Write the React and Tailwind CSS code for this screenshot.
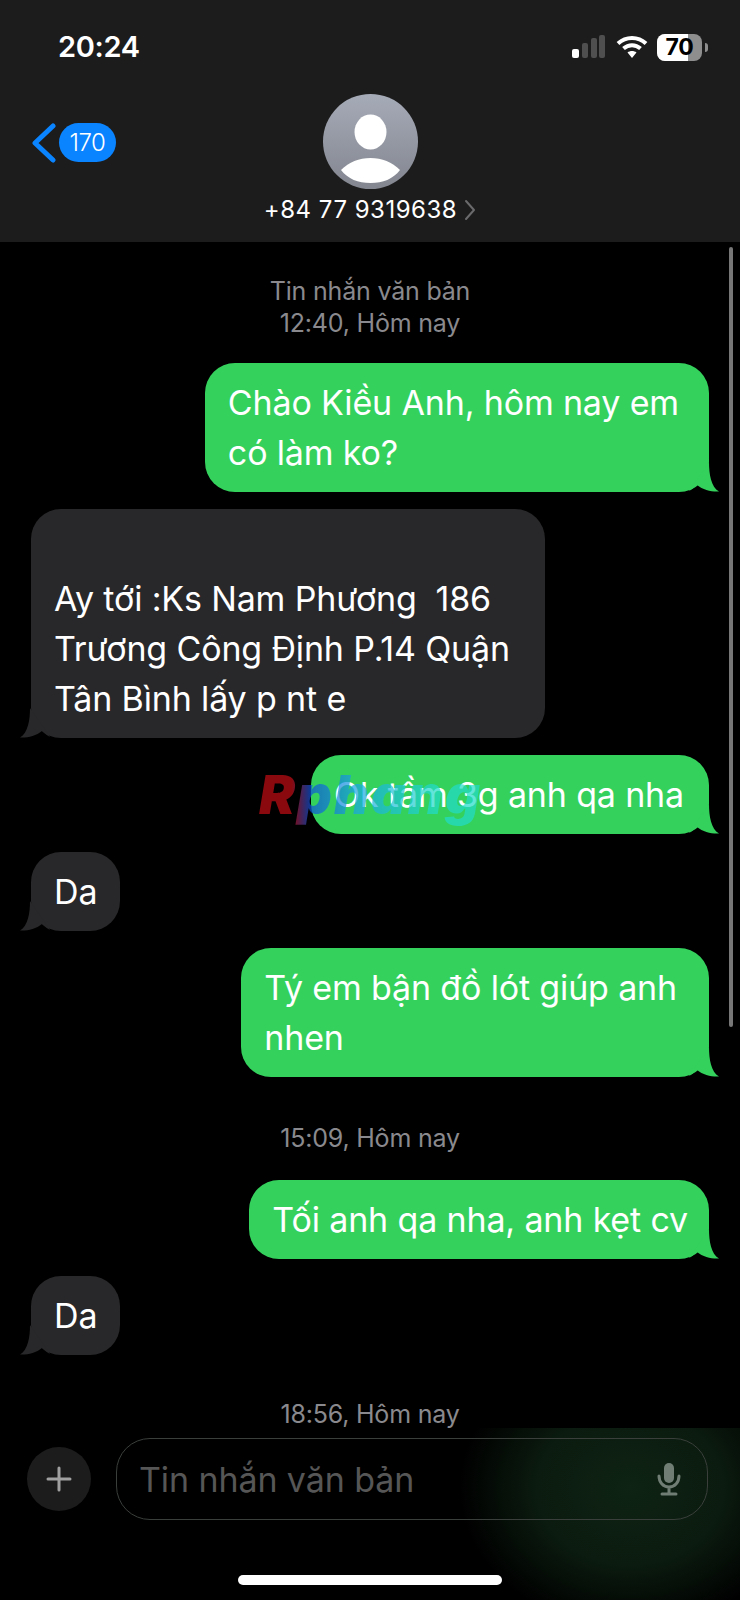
import React from "react";

const FONT = { fontFamily: "Inter, 'Noto Sans', sans-serif" };

function Tail({ side, color }) {
  const cls =
    side === "right"
      ? "absolute bottom-0 right-[-10px] w-[30px] h-[30px]"
      : "absolute bottom-0 left-[-11px] w-[30px] h-[30px] -scale-x-100";
  return (
    <svg viewBox="0 0 30 30" className={cls} fill={color}>
      <path d="M20 0C20 12 22 25 30 29.5C23 30 14 28 8 23C5 26 2 28 0 29Z" />
    </svg>
  );
}

function Bubble({ side, mt, pr = "pr-[23px]", children }) {
  const sent = side === "right";
  return (
    <div
      className={`relative w-fit pl-[23px] py-[14.5px] rounded-[30px] text-white text-[34px] leading-[50px] tracking-[-0.15px] ${mt} ${pr} ${
        sent ? "self-end bg-[#34d15d]" : "self-start bg-[#28282a]"
      }`}
    >
      {children}
      <Tail side={side} color={sent ? "#34d15d" : "#28282a"} />
    </div>
  );
}

function Stamp({ mt, lead = "leading-8", children }) {
  return (
    <div className={`self-center text-center text-[25px] text-[#8a8a8e] tracking-[-0.2px] ${lead} ${mt}`}>
      {children}
    </div>
  );
}

function StatusIcons() {
  return (
    <div className="flex items-center">
      <svg width="34" height="24" viewBox="0 0 34 24" className="mr-[10px]">
        <rect x="0" y="14" width="7" height="9" rx="2" fill="#fff" />
        <rect x="10" y="8" width="6" height="15" rx="2" fill="#4f4f4f" />
        <rect x="19" y="3" width="6" height="20" rx="2" fill="#4f4f4f" />
        <rect x="27" y="0" width="6" height="23" rx="2" fill="#4f4f4f" />
      </svg>
      <svg width="32" height="24" viewBox="0 0 32 24" className="mr-[9px]">
        <path d="M2 8.5C10 1 22 1 30 8.5" stroke="#fff" strokeWidth="4" fill="none" strokeLinecap="butt" />
        <path d="M7.5 13.5C12.5 9 19.5 9 24.5 13.5" stroke="#fff" strokeWidth="4" fill="none" />
        <path d="M11.5 17.5C14 15.5 18 15.5 20.5 17.5L16 23Z" fill="#fff" />
      </svg>
      <div className="relative w-[45px] h-[27px] rounded-[8px] bg-[#8e8e8e] overflow-hidden">
        <div className="w-[31px] h-full bg-white" />
        <div className="absolute inset-0 flex items-center justify-center text-black text-[23px] font-bold tracking-[-0.3px]">
          70
        </div>
      </div>
      <div className="w-[3px] h-[9px] ml-[3px] rounded-r-full bg-[#8e8e8e]" />
    </div>
  );
}

function Avatar() {
  return (
    <div className="w-[95px] h-[95px] rounded-full bg-gradient-to-b from-[#a6abb8] to-[#83868f] overflow-hidden">
      <svg viewBox="0 0 95 95" width="95" height="95" fill="#fff">
        <ellipse cx="47.5" cy="38" rx="16" ry="17.5" />
        <path d="M18 76C26 68 36 64 47.5 64C59 64 69 68 77 76C70 85 60 89 47.5 89C35 89 25 85 18 76Z" />
      </svg>
    </div>
  );
}

export default function App() {
  return (
    <div className="relative w-[740px] h-[1600px] bg-black flex flex-col overflow-hidden" style={FONT}>
      <header className="h-[242px] shrink-0 bg-[#1c1c1c] flex flex-col">
        <div className="h-[94px] flex items-center justify-between pl-[58px] pr-[32px]">
          <span className="text-white text-[29px] font-semibold tracking-[-0.3px]">20:24</span>
          <StatusIcons />
        </div>
        <div className="grid grid-cols-[1fr_auto_1fr] items-center">
          <div className="flex items-center pl-[32px] mt-[2px]">
            <svg width="24" height="40" viewBox="0 0 24 40" fill="none" stroke="#0a84ff" strokeWidth="5" strokeLinecap="round" strokeLinejoin="round">
              <path d="M21 3L3 20L21 37" />
            </svg>
            <div className="ml-[3px] w-[57px] h-[39px] rounded-full bg-[#0a84ff] flex items-center justify-center text-white text-[24px] font-light tracking-[-0.5px]">
              170
            </div>
          </div>
          <Avatar />
          <div />
        </div>
        <div className="mt-[5px] flex items-center justify-center text-white text-[24px] leading-8 tracking-[0.5px]">
          <span>+84 77 9319638</span>
          <svg width="12" height="22" viewBox="0 0 12 22" fill="none" stroke="#6a6a6c" strokeWidth="2" strokeLinecap="round" strokeLinejoin="round" className="ml-[7px]">
            <path d="M2 2L10 11L2 20" />
          </svg>
        </div>
      </header>

      <main className="flex-1 min-h-0 overflow-hidden flex flex-col pt-[33px] pl-[31px] pr-[31px]">
        <Stamp mt="mt-0">
          Tin nhắn văn bản
          <br />
          12:40, Hôm nay
        </Stamp>
        <Bubble side="right" mt="mt-6" pr="pr-[30px]">
          Chào Kiều Anh, hôm nay em
          <br />
          có làm ko?
        </Bubble>
        <Bubble side="left" mt="mt-[17px]" pr="pr-[35px]">
          <div className="h-[50px]" />
          Ay tới :Ks Nam Phương&nbsp; 186
          <br />
          Trương Công Định P.14 Quận
          <br />
          Tân Bình lấy p nt e
        </Bubble>
        <Bubble side="right" mt="mt-[17px]" pr="pr-[25px]">Ok tầm 3g anh qa nha</Bubble>
        <Bubble side="left" mt="mt-[18px]">Da</Bubble>
        <Bubble side="right" mt="mt-[17px]" pr="pr-[32px]">
          Tý em bận đồ lót giúp anh
          <br />
          nhen
        </Bubble>
        <Stamp mt="mt-[45px]">15:09, Hôm nay</Stamp>
        <Bubble side="right" mt="mt-[26px]" pr="pr-[21px]">Tối anh qa nha, anh kẹt cv</Bubble>
        <Bubble side="left" mt="mt-[17px]">Da</Bubble>
        <Stamp mt="mt-[47px]" lead="leading-[25px]">18:56, Hôm nay</Stamp>
      </main>

      <footer className="h-[172px] shrink-0 flex flex-col bg-[radial-gradient(ellipse_170px_140px_at_630px_60px,#0e2314_0%,#0b1b0f_55%,#000_100%)]">
        <div className="flex items-center pt-[10px] pl-[27px] pr-[32px]">
          <div className="w-[64px] h-[64px] rounded-full bg-[#1c1c1c] flex items-center justify-center">
            <svg width="26" height="26" viewBox="0 0 26 26" stroke="#a0a0a0" strokeWidth="3" strokeLinecap="round">
              <path d="M13 2V24M2 13H24" />
            </svg>
          </div>
          <div className="ml-[25px] flex-1 h-[82px] rounded-[34px] border border-[#3a3f3b] flex items-center justify-between pl-[22px] pr-[26px]">
            <span className="text-[34px] text-[#565656] leading-[50px] pt-[2px] tracking-[-0.1px]">Tin nhắn văn bản</span>
            <svg width="24" height="34" viewBox="0 0 24 34" fill="none" stroke="#6f7d74" strokeWidth="3" strokeLinecap="round">
              <rect x="7" y="1" width="10" height="20" rx="5" fill="#6f7d74" stroke="none" />
              <path d="M2 14C2 20 6 25 12 25C18 25 22 20 22 14M12 25V31M5 32H19" />
            </svg>
          </div>
        </div>
        <div className="mt-[55px] self-center w-[264px] h-[10px] rounded-full bg-white" />
      </footer>

      <div className="absolute left-[729px] top-[247px] w-1 h-[780px] rounded-full bg-[#777]" />

      <div className="absolute left-[259px] top-[760px] pr-3 text-[54px] leading-[70px] font-black italic tracking-[2px] text-transparent bg-clip-text bg-[linear-gradient(90deg,#c40d16_0%,#c40d16_14%,#0e53d9_22%,#1aa8e4_42%,#22dccb_75%,#22dccb_100%)] opacity-70">
        Rphang
      </div>
    </div>
  );
}
